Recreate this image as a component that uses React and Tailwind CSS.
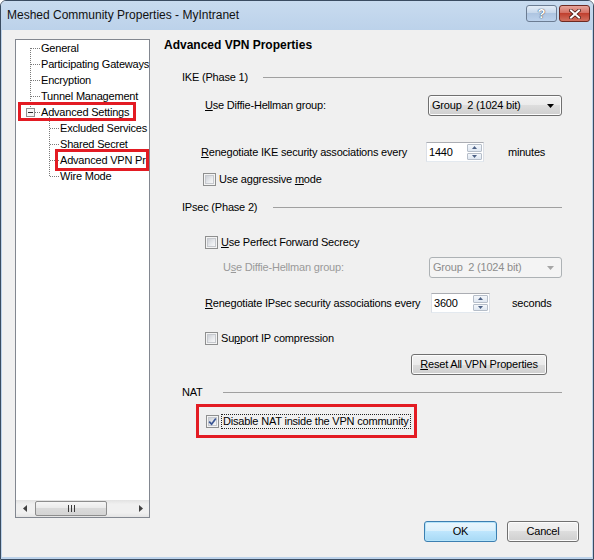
import React from 'react';

const base = "font-['Liberation_Sans',Arial,sans-serif] text-[11px] tracking-[-0.2px] text-black leading-none";

const U = ({ children }) => <span className="underline underline-offset-[1px]">{children}</span>;

const Checkbox = ({ checked }) => (
  <span className="relative flex h-[13px] w-[13px] shrink-0 items-center justify-center border border-[#8e8f8f] bg-[#f4f4f4]">
    <span className="h-[9px] w-[9px] border border-[#c6c9ce] bg-[linear-gradient(135deg,#cdd0d6,#e9ebee_60%,#f8f8f8)]" />
    {checked && (
      <svg className="absolute left-[1px] top-[1px]" width="9" height="9" viewBox="0 0 9 9">
        <path d="M1.2 4.6 L3.6 7.2 L7.8 1.4" fill="none" stroke="#3b5694" strokeWidth="1.7" />
      </svg>
    )}
  </span>
);

const CheckRow = ({ className, children, checked }) => (
  <div className={`flex h-[15px] items-center ${className}`}>
    <Checkbox checked={checked} />
    <span className="ml-[3px] whitespace-nowrap">{children}</span>
  </div>
);

const Header = ({ label, w, className }) => (
  <div className={`flex h-[14px] items-center pl-[18px] ${className}`}>
    <span className={`${w} whitespace-nowrap`}>{label}</span>
    <span className="h-px flex-1 bg-[#a0a0a0]" />
  </div>
);

const Combo = ({ disabled }) =>
  disabled ? (
    <div className="flex h-[21px] w-[133px] items-center rounded-[3px] border border-[#adb2b5] bg-[#f4f4f4] pl-[3px] pr-[7px] text-[#8d8d8d]">
      <span className="flex-1 whitespace-pre">Group  2 (1024 bit)</span>
      <svg width="7" height="4" viewBox="0 0 7 4"><path d="M0 0H7L3.5 4Z" fill="#a6a6a6" /></svg>
    </div>
  ) : (
    <div className="flex h-[21px] w-[134px] items-center rounded-[3px] border border-[#707070] bg-[linear-gradient(#f2f2f2,#ebebeb_50%,#dddddd_50%,#cfcfcf)] pl-[3px] pr-[7px] shadow-[inset_0_0_0_1px_#fcfcfc]">
      <span className="flex-1 whitespace-pre">Group  2 (1024 bit)</span>
      <svg width="7" height="4" viewBox="0 0 7 4"><path d="M0 0H7L3.5 4Z" fill="#000" /></svg>
    </div>
  );

const SpinBtn = ({ up }) => (
  <span className="flex flex-1 items-center justify-center rounded-[1px] border border-[#b6bec9] bg-[linear-gradient(#f4f7fb,#dfe7f1)]">
    <svg width="5" height="3" viewBox="0 0 5 3">
      <path d={up ? 'M0 3H5L2.5 0Z' : 'M0 0H5L2.5 3Z'} fill="#4d6185" />
    </svg>
  </span>
);

const Spin = ({ value, w }) => (
  <div className={`flex h-[20px] ${w} border border-[#abadb3] border-b-[#e3e9ef] border-x-[#dbdfe6] bg-white`}>
    <span className="flex flex-1 items-center pl-[2px]">{value}</span>
    <span className="my-[1px] mr-[1px] flex w-[15px] flex-col gap-px">
      <SpinBtn up />
      <SpinBtn />
    </span>
  </div>
);

const Button = ({ children, className, primary }) => (
  <div
    className={`flex h-[21px] items-center justify-center rounded-[3px] border ${
      primary
        ? 'border-[#3c7fb1] bg-[linear-gradient(#eaf6fd,#d9f0fc_50%,#bee6fd_50%,#a7d9f5)] shadow-[inset_0_0_0_1px_#b5e4fa]'
        : 'border-[#707070] bg-[linear-gradient(#f2f2f2,#ebebeb_50%,#dddddd_50%,#cfcfcf)] shadow-[inset_0_0_0_1px_#fcfcfc]'
    } ${className}`}
  >
    {children}
  </div>
);

const TitleBar = () => (
  <div className="flex h-[29px] shrink-0 items-start bg-[linear-gradient(#c8dbef,#bcd2ea)] pl-[6px] pr-[3px]">
    <span className="mt-[8px] flex-1 text-[12px] tracking-normal text-[#111]">Meshed Community Properties - MyIntranet</span>
    <div className="mt-[4px] flex gap-[2px]">
      <div className="flex h-[17px] w-[31px] items-center justify-center rounded-[3px] border border-[#6b7c92] bg-[linear-gradient(#e4edf7,#c3d5ea_50%,#aec5e1_50%,#bcd2ec)]">
        <span className="text-[13px] font-bold tracking-normal text-white [text-shadow:0_0_1px_#2c3b52,0_0_1px_#2c3b52]">?</span>
      </div>
      <div className="flex h-[17px] w-[31px] items-center justify-center rounded-[3px] border border-[#6e2a22] bg-[linear-gradient(#e7a59b,#d26a5d_50%,#c0402f_50%,#d1705f)]">
        <svg width="12" height="10" viewBox="0 0 12 10">
          <path d="M2 1.5L10 8.5M10 1.5L2 8.5" stroke="#4a1a14" strokeWidth="3.6" strokeLinecap="square" />
          <path d="M2 1.5L10 8.5M10 1.5L2 8.5" stroke="#fff" strokeWidth="2" strokeLinecap="square" />
        </svg>
      </div>
    </div>
  </div>
);

const treeItems = [
  { label: 'General', child: false },
  { label: 'Participating Gateways', child: false },
  { label: 'Encryption', child: false },
  { label: 'Tunnel Management', child: false },
  { label: 'Advanced Settings', child: false },
  { label: 'Excluded Services', child: true },
  { label: 'Shared Secret', child: true },
  { label: 'Advanced VPN Properties', child: true },
  { label: 'Wire Mode', child: true },
];

const Tree = () => (
  <div className="ml-[13px] mt-[9px] flex h-[479px] w-[135px] shrink-0 flex-col border border-[#828790] bg-white">
    <div className="relative flex-1 overflow-hidden">
      <svg className="absolute left-0 top-0" width="133" height="150" shapeRendering="crispEdges">
        <g stroke="#7a7a7a" strokeDasharray="1 1" fill="none">
          <path d="M14.5 8V67" />
          <path d="M15 8.5H24M15 24.5H24M15 40.5H24M15 56.5H24M19 72.5H24" />
          <path d="M33.5 77V137" />
          <path d="M34 88.5H43M34 104.5H43M34 120.5H43M34 136.5H43" />
        </g>
        <rect x="10.5" y="68.5" width="8" height="8" fill="#f7f7f7" stroke="#919191" />
        <path d="M12 72.5H17" stroke="#2b2b2b" />
      </svg>
      {treeItems.map((it) => (
        <div
          key={it.label}
          className={`relative flex h-[16px] items-center whitespace-nowrap ${it.child ? 'pl-[44px]' : 'pl-[25px]'}`}
        >
          {it.label}
        </div>
      ))}
      <div className="absolute left-[2px] top-[62px] h-[19px] w-[118px] border-[3px] border-[#e31b23]" />
      <div className="absolute left-[39px] top-[109px] h-[22px] w-[94px] border-[3px] border-[#e31b23]" />
    </div>
    <div className="flex h-[17px] shrink-0 items-center bg-[linear-gradient(#e2e2e2,#f0f0f0_25%,#f0f0f0_75%,#e4e4e4)]">
      <span className="flex h-[17px] w-[17px] items-center justify-center">
        <svg width="4" height="7" viewBox="0 0 4 7"><path d="M4 0V7L0 3.5Z" fill="#404040" /></svg>
      </span>
      <span className="ml-[2px] flex h-[15px] w-[72px] items-center justify-center gap-[2px] rounded-[2px] border border-[#8d8d8d] bg-[linear-gradient(#f6f6f6,#e9e9e9_50%,#dadada_50%,#d4d4d4)]">
        <span className="h-[7px] w-px bg-[#3a3a3a]" />
        <span className="h-[7px] w-px bg-[#3a3a3a]" />
        <span className="h-[7px] w-px bg-[#3a3a3a]" />
      </span>
      <span className="flex-1" />
      <span className="flex h-[17px] w-[17px] items-center justify-center">
        <svg width="4" height="7" viewBox="0 0 4 7"><path d="M0 0V7L4 3.5Z" fill="#404040" /></svg>
      </span>
    </div>
  </div>
);

const Main = () => (
  <div className="ml-[14px] flex w-[398px] flex-col">
    <div className="mt-[8px] flex h-[14px] items-center text-[12px] font-bold tracking-normal">Advanced VPN Properties</div>

    <Header className="mt-[18px]" label="IKE (Phase 1)" w="w-[81px]" />
    <div className="mt-[11px] flex h-[21px] items-center pl-[41px]">
      <span className="flex-1">
        <U>U</U>se Diffie-Hellman group:
      </span>
      <Combo />
    </div>
    <div className="mt-[26px] flex h-[20px] items-center pl-[37px]">
      <span className="w-[225px] whitespace-nowrap">
        <U>R</U>enegotiate IKE security associations every
      </span>
      <Spin value="1440" w="w-[58px]" />
      <span className="ml-[24px]">minutes</span>
    </div>
    <CheckRow className="mt-[10px] pl-[39px]">
      Use aggressive <U>m</U>ode
    </CheckRow>

    <Header className="mt-[13px]" label="IPsec (Phase 2)" w="w-[91px]" />
    <CheckRow className="mt-[21px] pl-[41px]">
      <U>U</U>se Perfect Forward Secrecy
    </CheckRow>
    <div className="mt-[7px] flex h-[21px] items-center pl-[59px] text-[#9a9a9a]">
      <span className="flex-1">
        U<U>s</U>e Diffie-Hellman group:
      </span>
      <Combo disabled />
    </div>
    <div className="mt-[15px] flex h-[20px] items-center pl-[41px]">
      <span className="w-[226px] whitespace-nowrap">
        <U>R</U>enegotiate IPsec security associations every
      </span>
      <Spin value="3600" w="w-[59px]" />
      <span className="ml-[22px]">seconds</span>
    </div>
    <CheckRow className="mt-[18px] pl-[41px]">
      Su<U>p</U>port IP compression
    </CheckRow>
    <Button className="ml-[247px] mt-[8px] w-[136px]">
      <span>
        <U>R</U>eset All VPN Properties
      </span>
    </Button>

    <Header className="mt-[10px]" label="NAT" w="w-[41px]" />
    <div className="ml-[32px] mt-[5px] flex h-[34px] w-[221px] items-center border-[3px] border-[#e31b23] pl-[7px]">
      <Checkbox checked />
      <span className="ml-[2px] whitespace-nowrap border border-dotted border-[#222] px-px py-px">
        Disable NAT inside the VPN community
      </span>
    </div>
  </div>
);

export default function App() {
  return (
    <div className={`flex h-[560px] w-[594px] flex-col overflow-hidden rounded-t-[6px] border border-[#3a4c61] bg-[#f0f0f0] ${base}`}>
      <TitleBar />
      <div className="flex flex-1 flex-col border-x border-b-2 border-[#bcd2ea]">
        <div className="flex">
          <Tree />
          <Main />
        </div>
        <div className="mt-[3px] flex justify-end gap-[10px] pr-[13px]">
          <Button primary className="w-[73px]">OK</Button>
          <Button className="w-[72px]">Cancel</Button>
        </div>
      </div>
    </div>
  );
}
